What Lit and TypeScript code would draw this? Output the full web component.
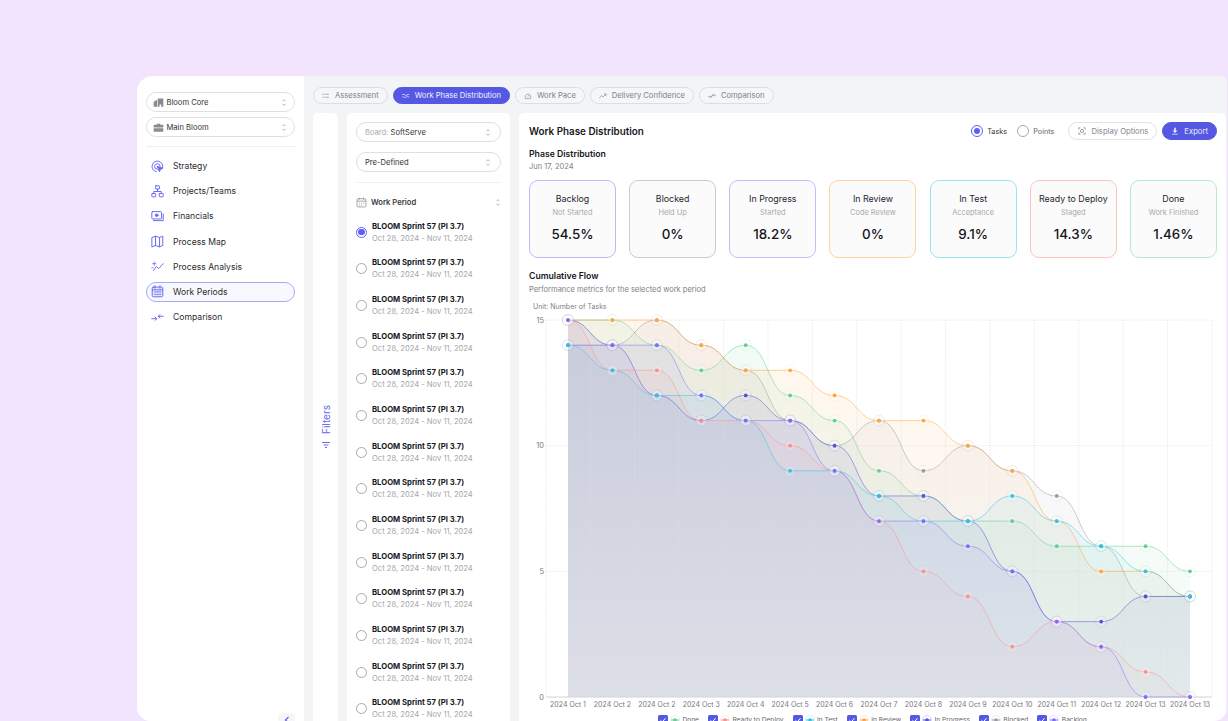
import { LitElement, html, css, svg } from "lit";
import { customElement } from "lit/decorators.js";

const X0 = 568, XS = 44.43, Y0 = 697, YS = 25.13;
const px = (i: number) => X0 + XS * i;
const py = (v: number) => Y0 - YS * v;

const series = [
  { id: "blocked", name: "Blocked", c: "#9a9aa6", v: [15,14,15,14,13,11,10,11,9,10,9,8,6,4,4] },
  { id: "done", name: "Done", c: "#62cf90", v: [15,15,14,13,14,12,11,9,8,7,7,6,6,6,5] },
  { id: "review", name: "In Review", c: "#ffa63d", v: [15,15,15,14,13,13,12,11,11,10,9,7,5,5,4] },
  { id: "prog", name: "In Progress", c: "#5450dc", v: [14,14,12,11,12,11,10,8,8,7,5,3,3,4,4] },
  { id: "ready", name: "Ready to Deploy", c: "#ff8f8f", v: [15,13,13,11,11,10,9,7,5,4,2,3,2,1,0] },
  { id: "test", name: "In Test", c: "#2cc5e6", v: [14,13,12,12,11,9,9,8,7,7,8,7,6,5,4] },
  { id: "back", name: "Backlog", c: "#7f6bff", v: [15,14,14,12,11,11,9,7,7,6,5,3,2,0,0] },
];
const legendOrder = ["done", "ready", "test", "review", "prog", "blocked", "back"];
const xLabels = ["2024 Oct 1","2024 Oct 2","2024 Oct 2","2024 Oct 3","2024 Oct 4","2024 Oct 5","2024 Oct 6","2024 Oct 7","2024 Oct 8","2024 Oct 9","2024 Oct 10","2024 Oct 11","2024 Oct 12","2024 Oct 13","2024 Oct 13"];

function curve(v: number[]) {
  let d = `M${px(0)} ${py(v[0])}`;
  for (let i = 1; i < v.length; i++) {
    const m = (px(i - 1) + px(i)) / 2;
    d += ` C${m} ${py(v[i - 1])} ${m} ${py(v[i])} ${px(i)} ${py(v[i])}`;
  }
  return d;
}

const chev = html`<svg class="chev" viewBox="0 0 8 12"><path d="M2 4.200 4 2.200l2 2M2 7.800l2 2 2-2"/></svg>`;

const navIcons = [
  svg`<path d="M14.300 9.500A6.600 6.600 0 1 0 6.500 14.400"/><path d="M11.300 8.400A3.500 3.500 0 1 0 7.500 11.500"/><path d="M8 8l6.500 2.300-2.800 1.100-1.100 2.800z" fill="currentColor"/>`,
  svg`<rect x="5.600" y="1" width="4.800" height="4" rx=".5"/><rect x="1" y="10.500" width="4.800" height="4" rx=".5"/><rect x="10.200" y="10.500" width="4.800" height="4" rx=".5"/><path d="M8 5v3M3.400 10.500V8h9.200v2.500"/>`,
  svg`<rect x="1" y="2" width="12" height="9" rx="1"/><path d="M15 5v8H3"/><circle cx="7" cy="6.500" r="1.600" fill="currentColor"/>`,
  svg`<path d="M1.500 3 5.500 1.500l5 1.500 4-1.500v11.500l-4 1.500-5-1.500-4 1.500zM5.500 1.500V13M10.500 3v11.500"/>`,
  svg`<path d="M3 13 6.500 8l3 2.500L15 4.500" stroke-dasharray="3 1"/><path d="M4 2.500v4M2 4.500h4M1 9.500h1.500" stroke-width="1"/>`,
  svg`<rect x="1.500" y="2.500" width="13" height="12" rx="1.500" fill="currentColor" fill-opacity=".12"/><path d="M1.500 6h13M5 1v3M11 1v3M4.500 8.500h1.500M7.500 8.500H9M10.500 8.500H12M4.500 11.500h1.500M7.500 11.500H9M10.500 11.500H12"/>`,
  svg`<path d="M1 9.500h6M5 7.500l2 2-2 2M15 6.500H9M11 4.500l-2 2 2 2"/>`,
];
const navNames = ["Strategy", "Projects/Teams", "Financials", "Process Map", "Process Analysis", "Work Periods", "Comparison"];

const tabIcons = [
  svg`<path d="M1.500 4.500l1 1 1.500-2M7 4.500h6M1.500 10.500l1 1 1.500-2M7 10.500h6"/>`,
  svg`<path d="M1 5h5l2 3 2-3h4M1 10h4l2 2 3-4 4 2"/>`,
  svg`<path d="M2.500 12.500a6 6 0 1 1 11 0zM8 9l2.500-3"/>`,
  svg`<path d="M1 12l4-5 3 3 6-6M10.500 4H14v3.500"/>`,
  svg`<path d="M1 9.500h6M5 7.500l2 2-2 2M15 6.500H9M11 4.500l-2 2 2 2"/>`,
];
const tabs = ["Assessment", "Work Phase Distribution", "Work Pace", "Delivery Confidence", "Comparison"];

const cards = [
  ["Backlog", "Not Started", "54.5%", "#c4b5fd"],
  ["Blocked", "Held Up", "0%", "#c9c9cf"],
  ["In Progress", "Started", "18.2%", "#c4bcff"],
  ["In Review", "Code Review", "0%", "#fdd29c"],
  ["In Test", "Acceptance", "9.1%", "#9be3f1"],
  ["Ready to Deploy", "Staged", "14.3%", "#fdc4c0"],
  ["Done", "Work Finished", "1.46%", "#b6ebca"],
];

@customElement("app-root")
export class AppRoot extends LitElement {
  static styles = css`
    :host { display: block; width: 1228px; height: 721px; overflow: hidden; background: #f3e4fe; font-family: Inter, "Liberation Sans", sans-serif; color: #1c1c22; box-sizing: border-box; padding: 76px 1px 0 137px; }
    * { box-sizing: border-box; }
    .app { position: relative; display: flex; height: 645px; border-radius: 16px 6px 14px 14px; overflow: hidden; background: #f2f4f6; }
    .side { width: 167px; flex: none; background: #fff; padding: 16px 9px 0; display: flex; flex-direction: column; gap: 5px; }
    .sel { height: 20px; border: 1px solid #dfe0e3; border-radius: 10px; background: #fff; display: flex; align-items: center; padding: 0 7px 0 6px; font-size: 7.600px; color: #333; flex: none; }
    .sel .lab { flex: 1; }
    .sel .muted { color: #aaa; }
    .sel svg.ic { width: 11px; height: 11px; margin-right: 2.500px; fill: #8b8b8f; }
    .chev { width: 6px; height: 9px; fill: none; stroke: #9a9a9f; stroke-width: 1; }
    .hr { height: 1px; background: #eeeff1; flex: none; }
    .side .hr { margin: 4px 0 4px; }
    nav { display: flex; flex-direction: column; gap: 5.200px; }
    .nav { height: 20px; border: 1px solid transparent; border-radius: 10px; display: flex; align-items: center; padding-left: 4px; gap: 9px; font-size: 8.600px; color: #2b2b31; }
    .nav.on { border-color: #a7a8fb; background: #f8f9ff; }
    .nav svg { width: 13px; height: 13px; flex: none; fill: none; stroke: currentColor; color: #6a68f2; stroke-width: 1.200; stroke-linecap: round; stroke-linejoin: round; }
    .collapse { position: absolute; left: 141px; top: 637px; width: 17px; height: 17px; border-radius: 5px; background: #f5f6f9; display: flex; justify-content: center; padding-top: 3px; }
    .collapse svg { width: 8px; height: 8px; fill: none; stroke: #6a68f2; stroke-width: 1.400; }
    .main { flex: 1; min-width: 0; padding: 11px 1px 0 9px; display: flex; flex-direction: column; gap: 9px; }
    .tabs { display: flex; gap: 5px; flex: none; }
    .tab { height: 17px; border: 1px solid #dcdde1; border-radius: 9px; padding: 0 8px 0 8px; display: flex; align-items: center; gap: 5px; font-size: 7.600px; color: #808087; background: #f5f6f8; white-space: nowrap; }
    .tab svg { width: 8px; height: 8px; fill: none; stroke: currentColor; stroke-width: 1.200; stroke-linecap: round; stroke-linejoin: round; }
    .tab.on { background: #5558e3; border-color: #5558e3; color: #f3f3ff; }
    .panels { flex: 1; min-height: 0; display: flex; gap: 9px; }
    .filters { width: 25px; flex: none; background: #fff; border-radius: 5px 5px 0 0; display: flex; flex-direction: column; align-items: center; justify-content: center; gap: 8px; padding-top: 20px; color: #6a68f2; font-size: 10px; }
    .filters span { writing-mode: vertical-rl; transform: rotate(180deg); }
    .filters svg { width: 8px; height: 8px; fill: none; stroke: currentColor; stroke-width: 1; }
    .list { width: 163px; flex: none; background: #fff; border-radius: 5px 5px 0 0; padding: 9px; overflow: hidden; display: flex; flex-direction: column; }
    .list .sel { margin-bottom: 10px; padding-left: 8px; padding-right: 9px; }
    .list .hr { margin-bottom: 13px; }
    .wp { display: flex; align-items: center; height: 12px; font-size: 7.600px; font-weight: 600; color: #3a3a40; margin-bottom: 12.500px; flex: none; }
    .wp svg.cal { width: 11px; height: 11px; margin-right: 4px; fill: none; stroke: #8d8d92; stroke-width: 1.100; }
    .wp b { flex: 1; font-weight: 600; }
    .rows { display: flex; flex-direction: column; gap: 13.680px; }
    .row { display: flex; align-items: center; gap: 5px; flex: none; }
    .radio { width: 11px; height: 11px; border: 1px solid #a9a9ae; border-radius: 50%; flex: none; display: flex; align-items: center; justify-content: center; background: #fff; }
    .radio.on { border-color: #5f5ff5; border-width: 1.200px; }
    .radio.on::after { content: ""; width: 6.500px; height: 6.500px; border-radius: 50%; background: #5f5ff5; }
    .t1 { font-size: 7.700px; line-height: 11px; font-weight: 700; color: #17171c; white-space: nowrap; }
    .t2 { font-size: 7.600px; line-height: 11px; color: #a6a6ab; margin-top: 1px; white-space: nowrap; }
    .content { flex: 1; min-width: 0; background: #fff; border-radius: 5px 5px 0 0; padding: 9px 9px 0 10px; overflow: hidden; }
    .head { display: flex; align-items: center; height: 18px; }
    .head h1 { flex: 1; margin: 0; font-size: 9.850px; font-weight: 600; color: #17171c; }
    .opt { display: flex; align-items: center; gap: 4px; font-size: 7.300px; color: #3a3a40; margin-right: 10px; }
    .opt .radio { width: 12px; height: 12px; }
    .opt.off { color: #66666c; margin-right: 14px; }
    .btn { height: 18px; border: 1px solid #e1e2e5; border-radius: 9px; display: flex; align-items: center; gap: 5px; padding: 0 8px 0 9px; font-size: 7.700px; color: #85858b; background: #fff; }
    .btn svg { width: 8px; height: 8px; fill: none; stroke: currentColor; stroke-width: 1; }
    .btn.pri { background: #5558e3; border-color: #5558e3; color: #ecedff; margin-left: 5px; padding: 0 8px; }
    .btn.pri svg { fill: currentColor; stroke: none; }
    .h2 { font-size: 8.700px; line-height: 11px; font-weight: 600; color: #17171c; margin-top: 8.500px; }
    .h2.b { margin-top: 12.500px; }
    .sub { font-size: 7.500px; line-height: 10px; color: #808087; margin-top: 2.500px; }
    .sub.b { margin-top: 3.500px; }
    .cards { display: flex; justify-content: space-between; margin-top: 8px; }
    .card { width: 87px; height: 78px; border: 1px solid; border-radius: 9px; background: #fbfbfc; display: flex; flex-direction: column; align-items: center; padding-top: 12px; }
    .c1 { font-size: 8.900px; line-height: 12px; color: #25252b; white-space: nowrap; }
    .c2 { font-size: 7.400px; line-height: 10px; color: #a8a8ae; margin-top: 3px; }
    .c3 { font-size: 13.400px; line-height: 18px; color: #141419; font-weight: 500; margin-top: 7px; }
    .unit { font-size: 7px; line-height: 10px; color: #808087; margin: 7px 0 0 4px; }
    .chart { display: block; width: 688px; height: 400px; }
    .chart text { font-family: Inter, "Liberation Sans", sans-serif; fill: #77777d; }
    .chart .xl { font-size: 7px; }
    .chart .yl { font-size: 7.400px; }
    .legend { display: flex; margin: 3px 0 0 129px; gap: 9px; font-size: 6.600px; color: #66666c; height: 10px; align-items: center; }
    .li { display: flex; align-items: center; gap: 2.500px; white-space: nowrap; }
    .cb { width: 10px; height: 10px; border-radius: 1.500px; background: #5558e3; flex: none; display: flex; }
    .cb svg { width: 10px; height: 10px; fill: none; stroke: #fff; stroke-width: 1; }
    .lg { width: 10px; height: 10px; flex: none; margin-left: -.5px; }
  `;

  private chart() {
    const grid = [];
    for (let i = 0; i <= 15; i++) {
      const x = 546 + 44.4 * i;
      grid.push(svg`<line x1=${x} x2=${x} y1="320" y2="697" stroke="#dcdce0" stroke-width=".8" stroke-dasharray="1 1.600"/>`);
    }
    for (const v of [5, 10, 15]) {
      grid.push(svg`<line x1="546" x2="1212" y1=${py(v)} y2=${py(v)} stroke="#dcdce0" stroke-width=".8" stroke-dasharray="1 1.600"/>`);
    }
    return html`<svg class="chart" viewBox="529 312 688 400">
      <defs>
        ${series.map(s => svg`<linearGradient id=${"g" + s.id} gradientUnits="userSpaceOnUse" x1="0" x2="0" y1="320" y2="697">
          <stop offset="0" stop-color=${s.c} stop-opacity=".09"/><stop offset="1" stop-color=${s.c} stop-opacity=".05"/></linearGradient>`)}
      </defs>
      ${series.map(s => svg`<path d="${curve(s.v)} L${px(14)} ${Y0} L${px(0)} ${Y0} Z" fill=${`url(#g${s.id})`}/>`)}
      ${grid}
      <line x1="546" x2="1212" y1="697" y2="697" stroke="#d4d4d8" stroke-width="1"/>
      ${series.map(s => svg`<path d=${curve(s.v)} fill="none" stroke=${s.c} stroke-opacity=".5" stroke-width="1"/>`)}
      ${series.map(s => s.v.map((v, i) => svg`
        <circle cx=${px(i)} cy=${py(v)} r="5.500" fill="#fff" fill-opacity=".14" stroke=${s.c} stroke-opacity=".14" stroke-width=".8"/>
        <circle cx=${px(i)} cy=${py(v)} r="1.900" fill=${s.c}/>`))}
      ${[0, 5, 10, 15].map(v => svg`<text class="yl" x="544" y=${py(v) + 2.700} text-anchor="end">${v}</text>`)}
      ${xLabels.map((l, i) => svg`<text class="xl" x=${px(i)} y="707" text-anchor="middle">${l}</text>`)}
    </svg>`;
  }

  render() {
    const rows = Array.from({ length: 14 }, (_, i) => i);
    return html`<div class="app">
      <aside class="side">
        <div class="sel"><svg class="ic" viewBox="0 0 16 16"><path d="M1 14V7l5-3v10zM7 14V2h8v12h-3v-3H9.500v3z"/></svg><span class="lab">Bloom Core</span>${chev}</div>
        <div class="sel"><svg class="ic" viewBox="0 0 16 16"><path d="M5.500 4V2.500h5V4H15v4H1V4zM1 9h14v5H1z"/></svg><span class="lab">Main Bloom</span>${chev}</div>
        <div class="hr"></div>
        <nav>
          ${navNames.map((n, i) => html`<div class="nav ${i === 5 ? "on" : ""}"><svg viewBox="0 0 16 16">${navIcons[i]}</svg>${n}</div>`)}
        </nav>
      </aside>
      <div class="collapse"><svg viewBox="0 0 8 8"><path d="M5.500 1 2.500 4l3 3"/></svg></div>
      <div class="main">
        <div class="tabs">
          ${tabs.map((t, i) => html`<div class="tab ${i === 1 ? "on" : ""}"><svg viewBox="0 0 16 16">${tabIcons[i]}</svg>${t}</div>`)}
        </div>
        <div class="panels">
          <div class="filters"><span>Filters</span><svg viewBox="0 0 8 8"><path d="M0 1.500h8M1.500 4h5M3 6.500h2"/></svg></div>
          <div class="list">
            <div class="sel"><span class="lab"><span class="muted">Board:</span> SoftServe</span>${chev}</div>
            <div class="sel"><span class="lab">Pre-Defined</span>${chev}</div>
            <div class="hr"></div>
            <div class="wp"><svg class="cal" viewBox="0 0 16 16"><rect x="1.500" y="2.500" width="13" height="12" rx="1.500"/><path d="M1.500 6h13M5 1v3M11 1v3M4.500 9h1.500M7.500 9H9M10.500 9H12M4.500 12h1.500M7.500 12H9"/></svg><b>Work Period</b>${chev}</div>
            <div class="rows">
              ${rows.map(i => html`<div class="row"><div class="radio ${i === 0 ? "on" : ""}"></div><div><div class="t1">BLOOM Sprint 57 (PI 3.7)</div><div class="t2">Oct 28, 2024 - Nov 11, 2024</div></div></div>`)}
            </div>
          </div>
          <div class="content">
            <div class="head">
              <h1>Work Phase Distribution</h1>
              <div class="opt"><div class="radio on"></div>Tasks</div>
              <div class="opt off"><div class="radio"></div>Points</div>
              <div class="btn"><svg viewBox="0 0 10 10"><path d="M1 3V1h2M7 1h2v2M9 7v2H7M3 9H1V7"/><circle cx="5" cy="5" r="2"/></svg>Display Options</div>
              <div class="btn pri"><svg viewBox="0 0 10 10"><path d="M4 1h2v3.500h2L5 7.500 2 4.500h2zM1.500 8.300h7v1h-7z"/></svg>Export</div>
            </div>
            <div class="h2">Phase Distribution</div>
            <div class="sub">Jun 17, 2024</div>
            <div class="cards">
              ${cards.map(c => html`<div class="card" style="border-color:${c[3]}"><div class="c1">${c[0]}</div><div class="c2">${c[1]}</div><div class="c3">${c[2]}</div></div>`)}
            </div>
            <div class="h2 b">Cumulative Flow</div>
            <div class="sub b">Performance metrics for the selected work period</div>
            <div class="unit">Unit: Number of Tasks</div>
            ${this.chart()}
            <div class="legend">
              ${legendOrder.map(id => {
                const s = series.find(x => x.id === id)!;
                return html`<div class="li"><div class="cb"><svg viewBox="0 0 10 10"><path d="M2.500 5.300l1.800 1.700 3.200-3.800"/></svg></div><svg class="lg" viewBox="0 0 10 10"><circle cx="5" cy="5" r="4.500" fill="none" stroke=${s.c} stroke-opacity=".25" stroke-width=".8"/><circle cx="5" cy="5" r="1.800" fill=${s.c}/><path d="M1 5h8" stroke=${s.c} stroke-width="1"/></svg>${s.name}</div>`;
              })}
            </div>
          </div>
        </div>
      </div>
    </div>`;
  }
}
